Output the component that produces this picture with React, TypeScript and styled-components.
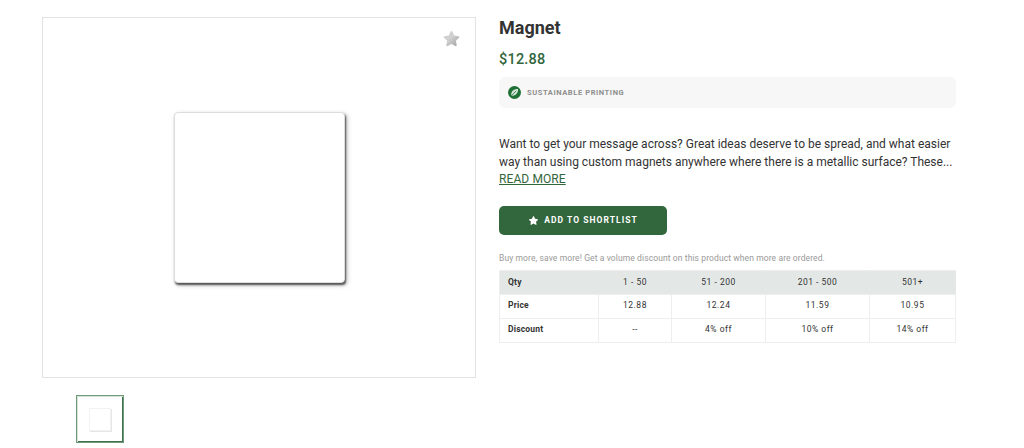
import React from 'react'
import styled, { createGlobalStyle } from 'styled-components'

const GlobalStyle = createGlobalStyle`
  html, body {
    margin: 0;
    background: #fff;
    font-family: "Roboto", "Liberation Sans", sans-serif;
    color: #333;
  }
`

const Page = styled.div`
  width: 1024px;
  height: 448px;
  overflow: hidden;
  display: flex;
  gap: 23px;
  padding: 17px 0 0 42px;
  box-sizing: border-box;
`

const Gallery = styled.div`
  width: 434px;
  display: flex;
  flex-direction: column;
  gap: 17px;
`

const Stage = styled.div`
  position: relative;
  height: 361px;
  box-sizing: border-box;
  border: 1px solid #e2e2e2;
  display: flex;
  align-items: center;
  justify-content: center;
`

const Favourite = styled.svg`
  position: absolute;
  top: 11px;
  right: 14px;
  width: 19px;
  height: 19px;
`

const MagnetPhoto = styled.div`
  width: 171px;
  height: 171px;
  margin-left: 1px;
  box-sizing: border-box;
  background: #fff;
  border: 1px solid #ddd;
  border-radius: 4px;
  box-shadow: 1px 2px 2px #555, 2px 2px 5px rgba(0, 0, 0, 0.25);
`

const Thumb = styled.div`
  width: 48px;
  height: 48px;
  margin-left: 34px;
  box-sizing: border-box;
  border: 1px solid #6f9a7c;
  box-shadow: inset 1px 1px 0 #d5e2d8, inset -1px -1px 0 #3f7049;
  display: flex;
  align-items: center;
  justify-content: center;
`

const ThumbPhoto = styled.div`
  width: 20px;
  height: 21px;
  background: #fff;
  border: 1px solid #f2f2f2;
  box-shadow: 1px 1px 0 #e6e6e6;
`

const Details = styled.div`
  width: 457px;
  display: flex;
  flex-direction: column;
`

const Title = styled.h1`
  margin: 0;
  font-size: 18px;
  line-height: 22px;
  font-weight: 700;
  color: #333;
`

const Price = styled.div`
  margin-top: 11px;
  font-size: 14.5px;
  line-height: 20px;
  font-weight: 500;
  letter-spacing: 0.2px;
  color: #32663d;
`

const Feature = styled.div`
  margin-top: 7px;
  height: 31px;
  display: flex;
  align-items: center;
  gap: 6px;
  padding-left: 9px;
  background: #f7f7f7;
  border-radius: 6px;
`

const FeatureIcon = styled.svg`
  width: 13px;
  height: 13px;
`

const FeatureLabel = styled.span`
  font-size: 7.5px;
  font-weight: 700;
  letter-spacing: 0.6px;
  color: #8e8e8e;
`

const Description = styled.p`
  margin: 28px 0 0;
  font-size: 12px;
  line-height: 17.5px;
  color: #333;
  white-space: nowrap;
`

const ReadMore = styled.a`
  display: block;
  font-size: 12px;
  line-height: 17.5px;
  width: fit-content;
  letter-spacing: 0.1px;
  color: #32663d;
  text-decoration: underline;
`

const ShortlistButton = styled.button`
  margin-top: 17px;
  width: 168px;
  height: 29px;
  display: flex;
  align-items: center;
  justify-content: center;
  gap: 5px;
  border: 0;
  border-radius: 5px;
  background: #32663d;
  color: #fff;
  font-family: inherit;
  font-size: 8.5px;
  font-weight: 700;
  letter-spacing: 1.05px;
`

const ButtonStar = styled.svg`
  width: 11px;
  height: 11px;
`

const VolumeNote = styled.p`
  margin: 17px 0 0;
  font-size: 8.5px;
  line-height: 12px;
  letter-spacing: 0.1px;
  color: #999;
`

const PriceTable = styled.table`
  margin-top: 6px;
  width: 456px;
  table-layout: fixed;
  border-collapse: collapse;
  font-size: 8.5px;
  color: #333;
`

const Row = styled.tr<{ $head?: boolean }>`
  height: 24px;
  background: ${(p) => (p.$head ? '#e3e8e6' : '#fff')};
`

const Cell = styled.td<{ $head?: boolean }>`
  padding: 0 0 ${(p) => (p.$head ? 1 : 3)}px;
  text-align: center;
  letter-spacing: 0.5px;
  border-top: 1px solid #eee;
  border-bottom: 1px solid #eee;
  border-left: 1px solid ${(p) => (p.$head ? '#e3e8e6' : '#eee')};
  border-right: 1px solid ${(p) => (p.$head ? '#e3e8e6' : '#eee')};
`

const LabelCell = styled(Cell)`
  padding-left: 8px;
  text-align: left;
  font-weight: 700;
  letter-spacing: 0.2px;
  border-left-color: #eee;
`

const StarShape = ({ fill }: { fill?: string }) => (
  <path
    fill={fill}
    d="M12 2.5c.5 0 .9.3 1.1.8l2.3 5 5.4.7c1 .1 1.4 1.3.7 2l-4 3.8 1.1 5.4c.2 1-.9 1.8-1.8 1.3L12 18.8l-4.8 2.7c-.9.5-2-.3-1.8-1.3l1.1-5.4-4-3.8c-.7-.7-.3-1.9.7-2l5.4-.7 2.3-5c.2-.5.6-.8 1.1-.8z"
  />
)

const rows = [
  { label: 'Price', values: ['12.88', '12.24', '11.59', '10.95'] },
  { label: 'Discount', values: ['--', '4% off', '10% off', '14% off'] }
]

const App = () => (
  <>
    <GlobalStyle />
    <Page>
      <Gallery>
        <Stage>
          <Favourite viewBox="0 0 24 24">
            <defs>
              <linearGradient id="favShade" x1="0" y1="0" x2="1" y2="1">
                <stop offset="0.45" stopColor="#d0d0d0" />
                <stop offset="1" stopColor="#9f9f9f" />
              </linearGradient>
            </defs>
            <StarShape fill="url(#favShade)" />
          </Favourite>
          <MagnetPhoto />
        </Stage>
        <Thumb>
          <ThumbPhoto />
        </Thumb>
      </Gallery>
      <Details>
        <Title>Magnet</Title>
        <Price>$12.88</Price>
        <Feature>
          <FeatureIcon viewBox="0 0 24 24">
            <circle cx="12" cy="12" r="12" fill="#1f7136" />
            <path d="M6 18C5 10 10 5.500 18.500 5.500 19 13 14 18.500 6 18z" fill="#d6e6da" />
            <path d="M5 19.500 15 9" stroke="#1f7136" strokeWidth="1.500" fill="none" />
          </FeatureIcon>
          <FeatureLabel>SUSTAINABLE PRINTING</FeatureLabel>
        </Feature>
        <Description>
          Want to get your message across? Great ideas deserve to be spread, and what easier
          <br />
          way than using custom magnets anywhere where there is a metallic surface? These...
        </Description>
        <ReadMore href="#">READ MORE</ReadMore>
        <ShortlistButton>
          <ButtonStar viewBox="0 0 24 24">
            <StarShape fill="#fff" />
          </ButtonStar>
          ADD TO SHORTLIST
        </ShortlistButton>
        <VolumeNote>Buy more, save more! Get a volume discount on this product when more are ordered.</VolumeNote>
        <PriceTable>
          <colgroup>
            <col style={{ width: 99 }} />
            <col style={{ width: 73 }} />
            <col style={{ width: 94 }} />
            <col style={{ width: 104 }} />
            <col style={{ width: 86 }} />
          </colgroup>
          <tbody>
            <Row $head>
              <LabelCell $head>Qty</LabelCell>
              <Cell $head>1 - 50</Cell>
              <Cell $head>51 - 200</Cell>
              <Cell $head>201 - 500</Cell>
              <Cell $head>501+</Cell>
            </Row>
            {rows.map((row) => (
              <Row key={row.label}>
                <LabelCell>{row.label}</LabelCell>
                {row.values.map((value) => (
                  <Cell key={value}>{value}</Cell>
                ))}
              </Row>
            ))}
          </tbody>
        </PriceTable>
      </Details>
    </Page>
  </>
)

export default App
